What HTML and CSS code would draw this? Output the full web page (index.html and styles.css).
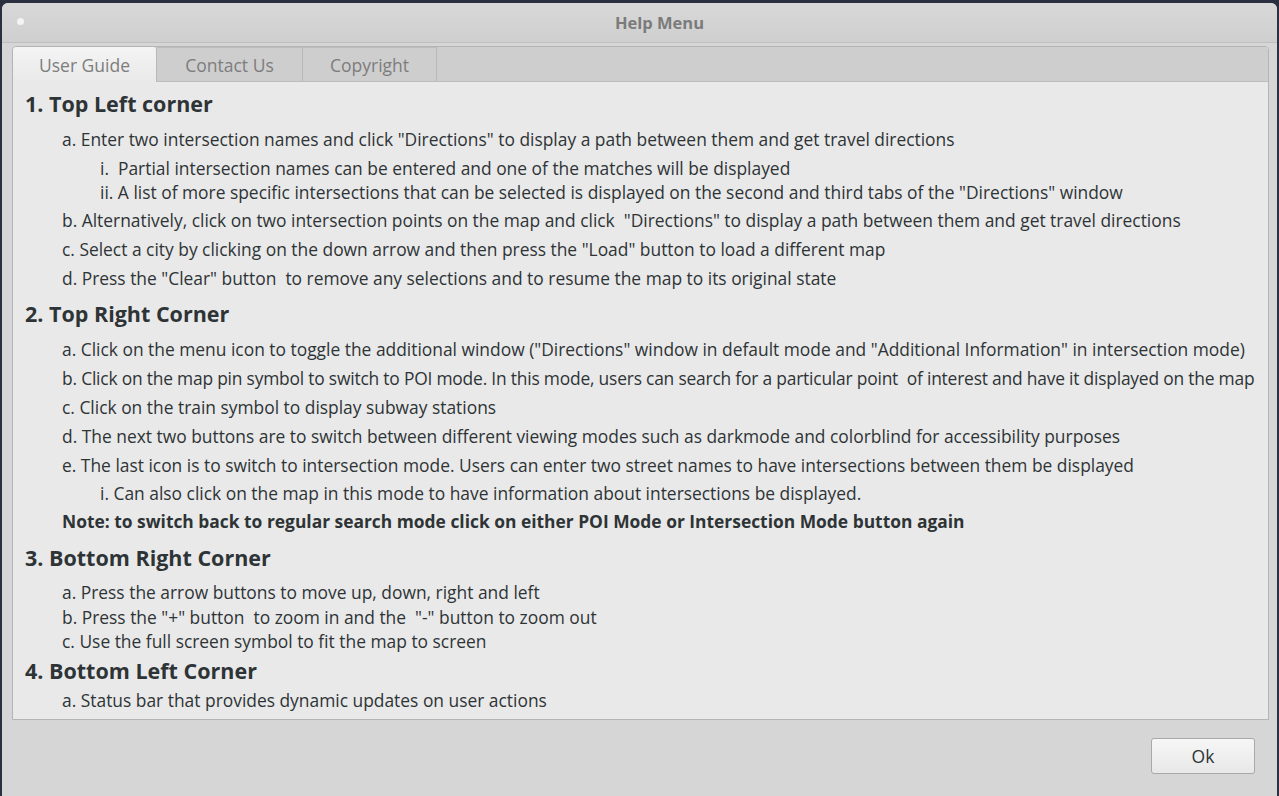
FILE: index.html
```html
<!DOCTYPE html>
<html>
<head>
<meta charset="utf-8">
<link rel="stylesheet" href="styles.css">
</head>
<body>
<div class="window">
  <div class="titlebar">
    <span class="dot"></span>
    <span class="title">Help Menu</span>
  </div>
  <div class="body">
    <div class="notebook">
      <div class="tabs">
        <div class="tab active">User Guide</div>
        <div class="tab">Contact Us</div>
        <div class="tab">Copyright</div>
      </div>
      <div class="page">
        <h2 class="h h1">1. Top Left corner</h2>
        <p class="l1 gap">a. Enter two intersection names and click "Directions" to display a path between them and get travel directions</p>
        <p class="l2 s1">i.&nbsp; Partial intersection names can be entered and one of the matches will be displayed</p>
        <p class="l2 s2">ii. A list of more specific intersections that can be selected is displayed on the second and third tabs of the "Directions" window</p>
        <p class="l1 after-sub">b. Alternatively, click on two intersection points on the map and click &nbsp;"Directions" to display a path between them and get travel directions</p>
        <p class="l1">c. Select a city by clicking on the down arrow and then press the "Load" button to load a different map</p>
        <p class="l1">d. Press the "Clear" button &nbsp;to remove any selections and to resume the map to its original state</p>
        <h2 class="h h2">2. Top Right Corner</h2>
        <p class="l1 gap">a. Click on the menu icon to toggle the additional window ("Directions" window in default mode and "Additional Information" in intersection mode)</p>
        <p class="l1 fit">b. Click on the map pin symbol to switch to POI mode. In this mode, users can search for a particular point &nbsp;of interest and have it displayed on the map</p>
        <p class="l1">c. Click on the train symbol to display subway stations</p>
        <p class="l1">d. The next two buttons are to switch between different viewing modes such as darkmode and colorblind for accessibility purposes</p>
        <p class="l1">e. The last icon is to switch to intersection mode. Users can enter two street names to have intersections between them be displayed</p>
        <p class="l2 s3">i. Can also click on the map in this mode to have information about intersections be displayed.</p>
        <p class="l1 note">Note: to switch back to regular search mode click on either POI Mode or Intersection Mode button again</p>
        <h2 class="h h3">3. Bottom Right Corner</h2>
        <p class="l1 gap s4">a. Press the arrow buttons to move up, down, right and left</p>
        <p class="l1 s5">b. Press the "+" button &nbsp;to zoom in and the &nbsp;"-" button to zoom out</p>
        <p class="l1 s5">c. Use the full screen symbol to fit the map to screen</p>
        <h2 class="h h4">4. Bottom Left Corner</h2>
        <p class="l1">a. Status bar that provides dynamic updates on user actions</p>
      </div>
    </div>
    <div class="actions">
      <button class="ok">Ok</button>
    </div>
  </div>
</div>
</body>
</html>
```
FILE: styles.css
```css
html, body {
  margin: 0;
  padding: 0;
  height: 796px;
  overflow: hidden;
  background: #2a3040;
}
body {
  padding-top: 3px;
  font-family: "Open Sans", "Noto Sans", sans-serif;
  color: #2e3436;
}
.window {
  margin: 0 2px 0 2px;
  height: 793px;
  background: #d6d6d6;
  border-radius: 6px 6px 0 0;
  display: flex;
  flex-direction: column;
  overflow: hidden;
}
.titlebar {
  height: 39px;
  flex: none;
  background: linear-gradient(#d8d8d8, #cfcfcf);
  border-bottom: 1px solid #bfbfbf;
  display: flex;
  align-items: center;
  justify-content: center;
  position: relative;
}
.dot {
  position: absolute;
  left: 15px;
  top: 15px;
  width: 7px;
  height: 7px;
  border-radius: 50%;
  background: #f4f4f4;
}
.title {
  font-weight: bold;
  font-size: 16.5px;
  color: #7b7b7b;
  margin-left: 40px;
}
.body {
  flex: 1;
  display: flex;
  flex-direction: column;
  padding: 3px 8px 0 10px;
}
.notebook {
  height: 672px;
  border: 1px solid #b4b4b4;
  border-radius: 4px 4px 0 0;
  background: #e9e9e9;
  display: flex;
  flex-direction: column;
  overflow: hidden;
}
.tabs {
  height: 34px;
  flex: none;
  display: flex;
  background: #cecece;
  border-bottom: 1px solid #bcbcbc;
}
.tab {
  font-size: 17.5px;
  color: #7d7d7d;
  display: flex;
  align-items: center;
  justify-content: center;
  border-right: 1px solid #b8b8b8;
  border-top: 1px solid #bdbdbd;
}
.tab:nth-child(1) { width: 143px; }
.tab:nth-child(2) { width: 145px; }
.tab:nth-child(3) { width: 133px; }
.tab.active {
  background: linear-gradient(#f4f4f4, #e9e9e9);
  border-top: none;
  margin-bottom: -1px;
  border-radius: 3px 3px 0 0;
}
.page {
  flex: 1;
  padding: 0 0 0 12px;
  white-space: nowrap;
  overflow: hidden;
}
.h {
  margin: 0;
  font-size: 21.5px;
  font-weight: bold;
  line-height: 30px;
}
.h1 { margin-top: 7px; }
.h2 { margin-top: 6px; }
.h3 { margin-top: 6px; }
.h4 { margin-top: 3px; }
p {
  margin: 0;
  font-size: 17.4px;
  line-height: 29px;
}
p.gap { margin-top: 6px; }
p.s1 { line-height: 24px; margin-top: 2px; }
p.s2 { line-height: 24px; }
p.after-sub { margin-top: 2px; }
p.s3 { line-height: 26px; }
p.s4 { line-height: 26px; }
p.s5 { line-height: 24px; }
p.fit { letter-spacing: -0.2px; }
.l1 { padding-left: 37px; }
.l2 { padding-left: 75px; }
.note { font-weight: bold; line-height: 31px; }
.actions {
  display: flex;
  justify-content: flex-end;
  padding: 18px 14px 0 0;
}
.ok {
  width: 104px;
  height: 36px;
  border: 1px solid #a9a9a9;
  border-radius: 3px;
  background: linear-gradient(#f6f6f6, #e8e8e8);
  font-family: "Open Sans", "Noto Sans", sans-serif;
  font-size: 17.5px;
  color: #2e3436;
  padding: 0;
}
```
